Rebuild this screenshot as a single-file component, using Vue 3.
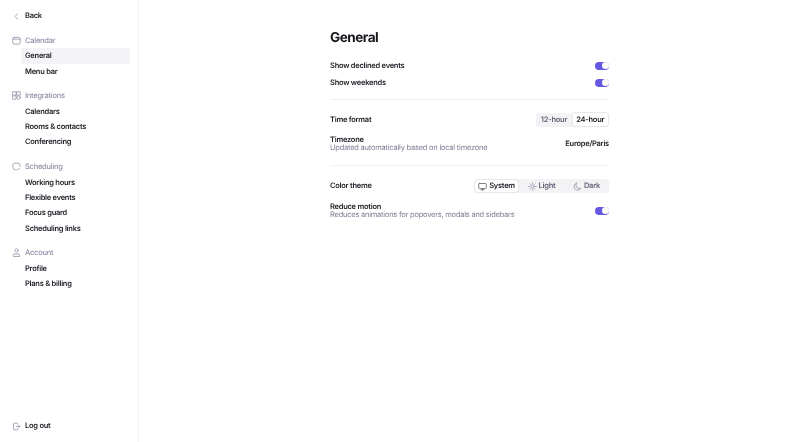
<script setup>
const groups = [
  { name: 'Calendar', icon: 'cal', items: ['General', 'Menu bar'] },
  { name: 'Integrations', icon: 'grid', items: ['Calendars', 'Rooms & contacts', 'Conferencing'] },
  { name: 'Scheduling', icon: 'sched', items: ['Working hours', 'Flexible events', 'Focus guard', 'Scheduling links'] },
  { name: 'Account', icon: 'user', items: ['Profile', 'Plans & billing'] }
]
</script>

<template>
  <div class="page">
    <aside class="sidebar">
      <div class="back">
        <svg class="ico" viewBox="0 0 12 12"><path d="M7.500 2.500 4 6l3.500 3.500" /></svg>
        <span>Back</span>
      </div>
      <nav class="groups">
        <section v-for="g in groups" :key="g.name" class="group">
          <div class="group-head">
            <svg class="ico" viewBox="0 0 12 12">
              <template v-if="g.icon === 'cal'">
                <rect x="1" y="1.800" width="10" height="9" rx="2" /><path d="M1 4.200h10" />
              </template>
              <template v-else-if="g.icon === 'grid'">
                <rect x="1" y="1" width="4.500" height="4.500" /><rect x="6.500" y="1" width="4.500" height="4.500" /><rect x="1" y="6.500" width="4.500" height="4.500" /><circle cx="8.750" cy="8.750" r="2.250" />
              </template>
              <template v-else-if="g.icon === 'sched'">
                <path d="M10.800 6V4A2.500 2.500 0 0 0 8.300 1.500H3.700A2.500 2.500 0 0 0 1.200 4v3a3.200 3.200 0 0 0 3.200 3.200H6" /><path d="M7.800 10.400 10.600 8" stroke-dasharray="1.200 1" />
              </template>
              <template v-else>
                <circle cx="6" cy="3.200" r="2.200" /><path d="M1.800 10.800V9.800A2 2 0 0 1 3.800 7.800h4.400A2 2 0 0 1 10.200 9.800v1z" />
              </template>
            </svg>
            <span>{{ g.name }}</span>
          </div>
          <a v-for="item in g.items" :key="item" class="item" :class="{ active: item === 'General' }">{{ item }}</a>
        </section>
      </nav>
      <div class="logout">
        <svg class="ico" viewBox="0 0 12 12"><path d="M7.500 3V2.500a1 1 0 0 0-1-1H3a1 1 0 0 0-1 1v7a1 1 0 0 0 1 1h3.500a1 1 0 0 0 1-1V9" /><path d="M5.500 6h5M8.800 4.300 10.500 6 8.800 7.700" /></svg>
        <span>Log out</span>
      </div>
    </aside>

    <main class="main">
      <div class="content">
        <h1>General</h1>
        <div class="block first">
          <div class="row r17"><span class="label">Show declined events</span><span class="toggle"></span></div>
          <div class="row r17"><span class="label">Show weekends</span><span class="toggle"></span></div>
        </div>
        <div class="block">
          <div class="row seg-row">
            <span class="label">Time format</span>
            <div class="seg">
              <span class="opt">12-hour</span>
              <span class="opt on">24-hour</span>
            </div>
          </div>
          <div class="row two">
            <div><div class="label">Timezone</div><div class="sub">Updated automatically based on local timezone</div></div>
            <span class="label">Europe/Paris</span>
          </div>
        </div>
        <div class="block last">
          <div class="row seg-row">
            <span class="label">Color theme</span>
            <div class="seg theme">
              <span class="opt on">
                <svg class="ico dark" viewBox="0 0 12 12"><rect x="1" y="2" width="10" height="6.800" rx="1" /><path d="M4 10.500h4M6 8.800v1.700" /></svg>System
              </span>
              <span class="opt">
                <svg class="ico" viewBox="0 0 12 12"><circle cx="6" cy="6" r="2.200" /><path d="M6 1v1M6 10v1M1 6h1M10 6h1M2.500 2.500l.7.7M8.800 8.800l.7.7M2.500 9.500l.7-.7M8.800 3.200l.7-.7" /></svg>Light
              </span>
              <span class="opt">
                <svg class="ico" viewBox="0 0 12 12"><path d="M4.500 1.500A4.800 4.800 0 0 0 10.500 8.300 4.800 4.800 0 0 1 4.500 10.500 4.800 4.800 0 0 1 4.500 1.500z" /></svg>Dark
              </span>
            </div>
          </div>
          <div class="row two">
            <div><div class="label">Reduce motion</div><div class="sub">Reduces animations for popovers, modals and sidebars</div></div>
            <span class="toggle"></span>
          </div>
        </div>
      </div>
    </main>
  </div>
</template>

<style scoped>
.page { display: flex; width: 800px; height: 442px; overflow: hidden; background: #fff; font-family: Inter, "Noto Sans", sans-serif; font-size: 7.500px; letter-spacing: -0.250px; line-height: 8px; color: #24242c; font-weight: 600; text-rendering: geometricPrecision; filter: blur(0.3px); }
.sidebar { width: 139px; flex: none; border-right: 1px solid #f2f2f4; display: flex; flex-direction: column; padding: 10px 8px 10px 12px; box-sizing: border-box; }
.back, .logout, .group-head { display: flex; align-items: center; gap: 4px; height: 12px; }
.ico { width: 9px; height: 9px; flex: none; fill: none; stroke: #8d8da3; stroke-width: 1; stroke-linecap: round; stroke-linejoin: round; }
.ico.dark { stroke: #55555f; }
.groups { margin-top: 12.500px; flex: 1; }
.group { margin-bottom: 11px; }
.group-head { color: #8f8fa8; font-weight: 500; }
.item { display: block; margin-left: 9px; height: 15.350px; line-height: 15.350px; padding-left: 4px; border-radius: 3px; white-space: nowrap; }
.group-head + .item { margin-top: 1.800px; }
.item.active { background: #f4f4f6; }
.main { flex: 1; display: flex; justify-content: center; }
.content { width: 279px; padding-top: 31px; }
h1 { margin: 0; font-size: 13.600px; letter-spacing: -0.500px; line-height: 14px; font-weight: 700; color: #16161c; }
.block { border-top: 1px solid #f1f1f3; padding: 9.500px 0 13px; }
.block.first { border: 0; padding: 12px 0 8px; }
.block.last { padding-top: 10px; }
.row { display: flex; justify-content: space-between; align-items: center; }
.r17 { height: 17px; }
.seg-row { height: 20px; }
.two { height: 16px; margin-top: 6.500px; }
.label { color: #24242c; }
.sub { color: #7f7f98; font-weight: 400; letter-spacing: -0.230px; }
.toggle { width: 14px; height: 8px; border-radius: 4px; background: #6558e0; position: relative; }
.toggle::after { content: ""; position: absolute; right: 0.500px; top: 0.500px; width: 7px; height: 7px; border-radius: 50%; background: #fff; }
.seg { display: flex; background: #f3f3f6; border-radius: 3px; height: 14px; align-items: center; }
.opt { display: flex; align-items: center; justify-content: center; gap: 2px; width: 37px; height: 14px; color: #64647a; border-radius: 3px; }
.opt.on { background: #fff; color: #24242c; box-shadow: 0 0 0 1px #e8e8ec, 0 1px 1px rgba(0,0,0,.08); height: 12.500px; margin-right: 1px; width: 35.500px; }
.theme .opt { width: 45px; box-sizing: border-box; }
.theme .opt.on { width: 43px; margin: 0 1px; }
</style>
